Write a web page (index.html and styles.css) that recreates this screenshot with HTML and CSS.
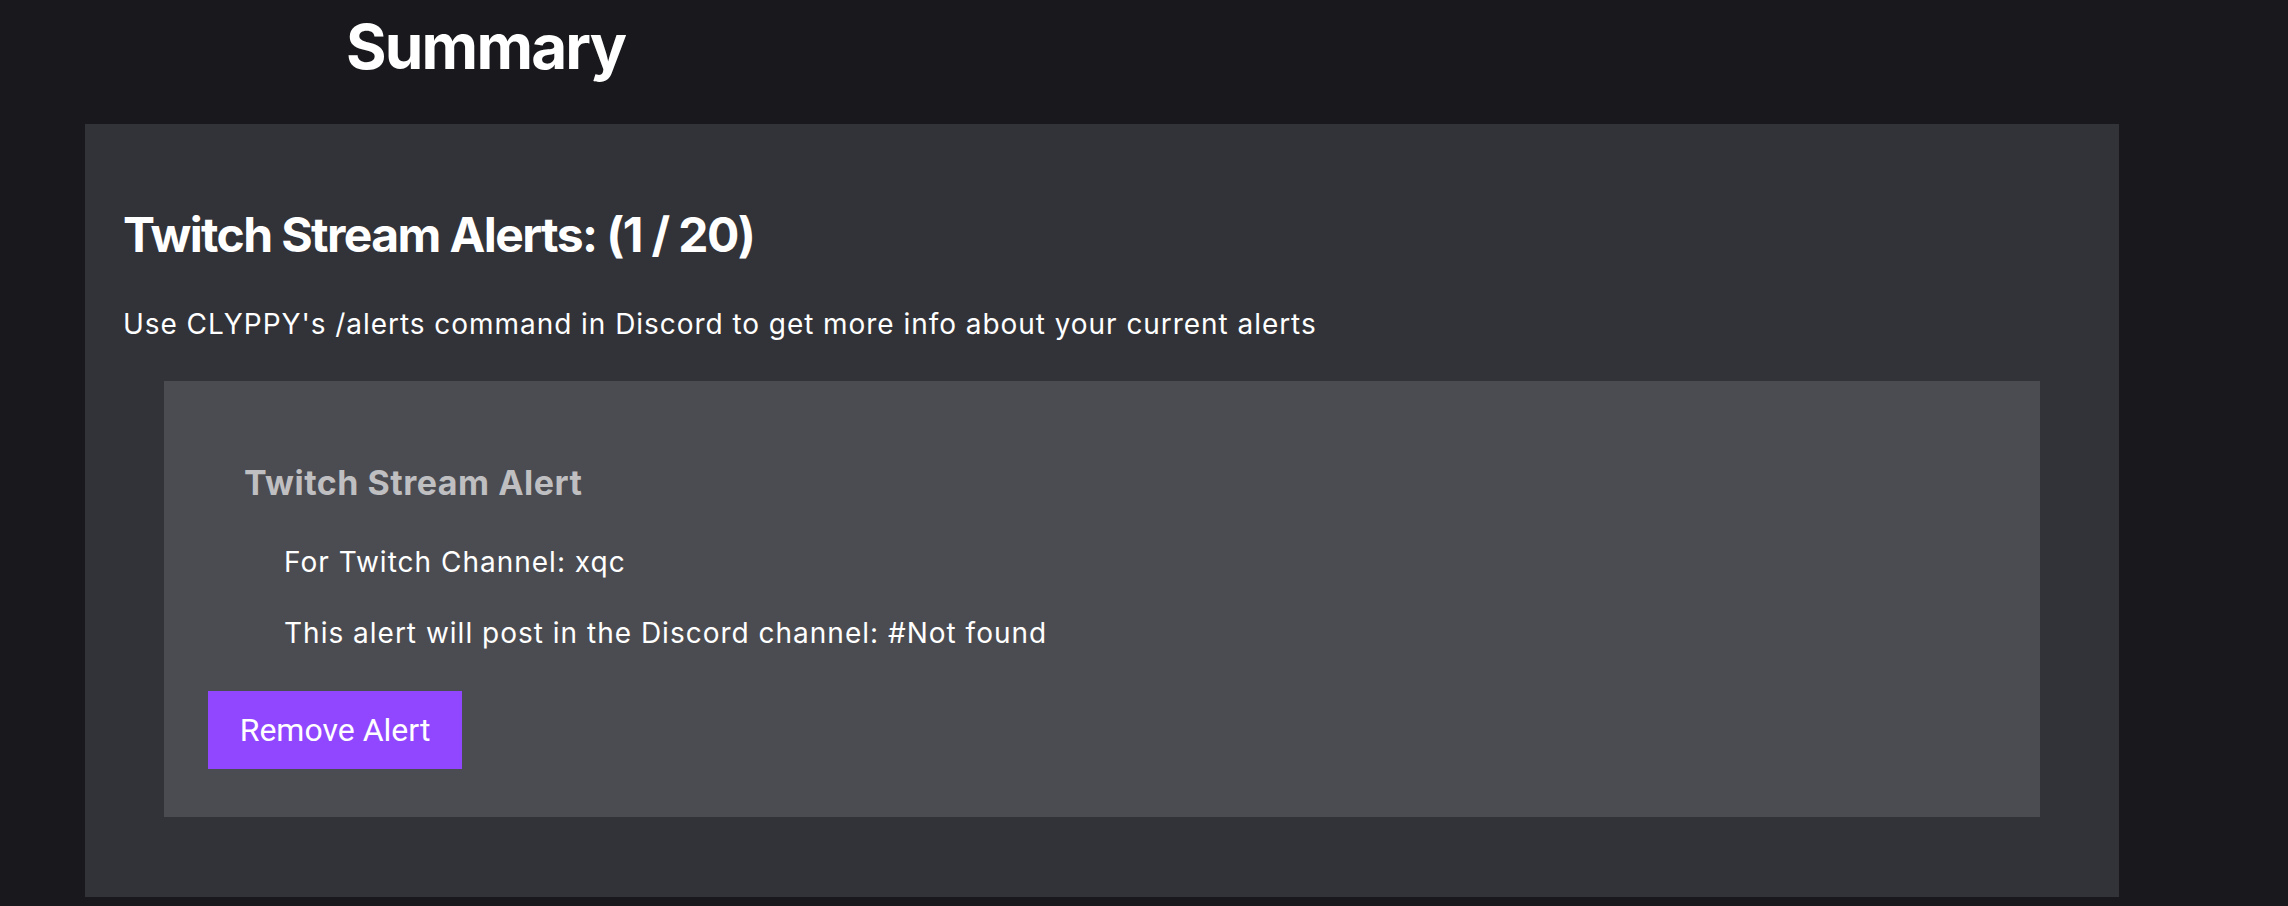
FILE: index.html
```html
<!DOCTYPE html>
<html lang="en">
<head>
<meta charset="utf-8">
<title>Summary</title>
<link rel="stylesheet" href="styles.css">
</head>
<body>
  <header class="page-header">
    <h1 class="page-title">Summary</h1>
  </header>
  <main class="panel">
    <h2 class="panel-title">Twitch Stream Alerts: (1 / 20)</h2>
    <p class="panel-desc">Use CLYPPY's /alerts command in Discord to get more info about your current alerts</p>
    <section class="alert-card">
      <h3 class="alert-title">Twitch Stream Alert</h3>
      <p class="alert-line alert-line-first">For Twitch Channel: xqc</p>
      <p class="alert-line">This alert will post in the Discord channel: #Not found</p>
      <button class="remove-btn" type="button">Remove Alert</button>
    </section>
  </main>
</body>
</html>
```

FILE: styles.css
```css
html, body {
  margin: 0;
  padding: 0;
}
body {
  background: #19181d;
  color: #f4f4f5;
  font-family: "Inter", "Liberation Sans", sans-serif;
  width: 2288px;
  height: 906px;
  overflow: hidden;
}
.page-header {
  height: 124px;
  box-sizing: border-box;
  padding: 16px 0 0 346px;
}
.page-title {
  margin: 0;
  font-size: 62px;
  line-height: 62px;
  font-weight: 700;
  letter-spacing: -1.8px;
  color: #ffffff;
}
.panel {
  display: flex;
  flex-direction: column;
  align-items: flex-start;
  margin-left: 85px;
  width: 2034px;
  box-sizing: border-box;
  background: #323338;
  padding: 87px 38px 38px 38px;
}
.panel-title {
  margin: 0;
  font-size: 48px;
  line-height: 48px;
  font-weight: 700;
  letter-spacing: -1.6px;
  color: #ffffff;
}
.panel-desc {
  margin: 51px 0 0 0;
  font-size: 28px;
  line-height: 28px;
  font-weight: 400;
  letter-spacing: 0.95px;
  color: #ffffff;
}
.alert-card {
  align-self: stretch;
  margin: 43px 41px 42px 41px;
  background: #4b4c51;
  padding: 85px 44px 48px 44px;
  display: flex;
  flex-direction: column;
  align-items: flex-start;
}
.alert-title {
  margin: 0 0 0 36px;
  font-size: 34px;
  line-height: 34px;
  font-weight: 700;
  letter-spacing: 0.5px;
  color: #bfbfc1;
}
.alert-line {
  margin: 43px 0 0 76px;
  font-size: 28px;
  line-height: 28px;
  letter-spacing: 1px;
  color: #ffffff;
}
.alert-line-first {
  margin-top: 48px;
}
.remove-btn {
  margin-top: 44px;
  height: 78px;
  width: 254px;
  padding: 0;
  border: none;
  border-radius: 0;
  background: #9147ff;
  color: #ffffff;
  font-family: "Roboto", "Liberation Sans", sans-serif;
  font-size: 32px;
  font-weight: 400;
  cursor: pointer;
}
```
